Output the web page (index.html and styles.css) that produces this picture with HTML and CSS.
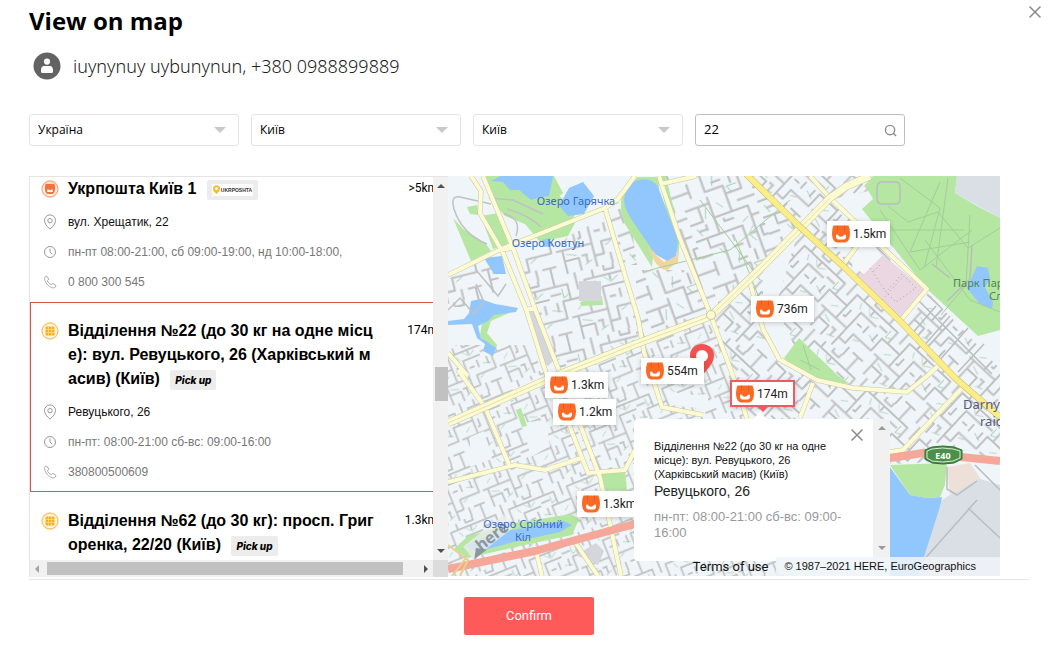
FILE: index.html
```html
<!DOCTYPE html>
<html lang="uk">
<head>
<meta charset="utf-8">
<title>View on map</title>
<link rel="stylesheet" href="styles.css">
</head>
<body>
<svg class="defs" aria-hidden="true">
  <symbol id="i-bag" viewBox="0 0 18 18"><path fill="#fa6a25" d="M1.500.5h15q1.800 4 1.400 9.500c-.4 5-2.400 7.500-5.900 7.500H6C2.500 17.500.5 15 .1 10Q-.3 4.500 1.500.5z"/><path fill="#fff" d="M4 9.800h2q.5 2 3 2t3-2h2q.5 4.800-2.500 4.800h-5Q3.500 14.600 4 9.800z"/><path stroke="#d9541a" stroke-width=".7" d="M5.500.5v5M12.500.5v5"/></symbol>
  <symbol id="i-pin" viewBox="0 0 16 16"><path fill="none" stroke="#999" d="M8 15.200C5 12.500 2.500 9.800 2.500 6.400a5.500 5.500 0 0 1 11 0c0 3.400-2.500 6.100-5.500 8.800z"/><circle cx="8" cy="6.700" r="2.200" fill="none" stroke="#999"/></symbol>
  <symbol id="i-clock" viewBox="0 0 16 16"><circle cx="8" cy="8" r="5.500" fill="none" stroke="#999"/><path fill="none" stroke="#999" d="M8 4.500V8l2.200 2.200"/></symbol>
  <symbol id="i-phone" viewBox="0 0 16 16"><path fill="none" stroke="#aaa" d="M3.200 2.600 4.600 2l2.200 3-1.400 1.700c.6 1.700 2 3.200 3.800 4l1.800-1.400 3 2.200-.8 1.700c-1.500 1.600-5 .2-7.400-2.200S1.600 4.400 3.200 2.600z"/></symbol>
  <symbol id="i-grid" viewBox="0 0 18 18"><circle cx="9" cy="9" r="8" fill="#fff8e6" stroke="#f7c566" stroke-width="1.300"/><rect x="4.500" y="4.500" width="9" height="9" rx="1" fill="#f9ae1f"/><path stroke="#fdd98c" stroke-width=".8" d="M7.500 4.500v9M10.500 4.500v9M4.500 7.500h9M4.500 10.500h9"/></symbol>
  <symbol id="i-ring" viewBox="0 0 18 18"><circle cx="9" cy="9" r="8" fill="#fff3ec" stroke="#f8a983" stroke-width="1.300"/><path fill="#f4733a" d="M4.500 3.800h9q1 3 .5 6-.5 4.200-3.200 4.200H7.200Q4.500 14 4 9.800q-.5-3 .5-6z"/><path fill="#fff" d="M6.300 9.600h1.200q1.500 1 3 0h1.200v2.400H6.300z"/></symbol>
</svg>

<main class="dialog">
  <button class="close" type="button" aria-label="Close"><svg viewBox="0 0 14 14"><path d="M1.500 1.500l11 11M12.500 1.500l-11 11"/></svg></button>
  <h1>View on map</h1>
  <div class="user">
    <svg viewBox="0 0 28 28" aria-hidden="true"><circle cx="14" cy="14" r="13.500" fill="#636363"/><circle cx="14" cy="9.600" r="3.100" fill="#fff"/><path fill="#fff" d="M10 14h8q2 1 2 4v1.500q0 1.500-1.500 1.500h-9Q8 21 8 19.500V18q0-3 2-4z"/></svg>
    <span>iuynynuy uybunynun, +380 0988899889</span>
  </div>

  <form class="filters">
    <label class="field field--select"><select aria-label="Country"><option>Україна</option></select></label>
    <label class="field field--select"><select aria-label="Region"><option>Київ</option></select></label>
    <label class="field field--select"><select aria-label="City"><option>Київ</option></select></label>
    <label class="field field--search"><input type="text" value="22" aria-label="Search"><svg viewBox="0 0 14 14" aria-hidden="true"><circle cx="6.500" cy="6.500" r="5"/><path d="M10 10l3 3"/></svg></label>
  </form>

  <div class="results">
    <section class="list" aria-label="Pick-up points">
      <div class="list__view">
        <ul>
          <li class="point">
            <svg class="point__icon"><use href="#i-ring"/></svg>
            <h2>Укрпошта Київ 1 <span class="brand"><span><svg viewBox="0 0 8 10"><path fill="#f3bd2c" d="M4 0a4 4 0 0 1 4 4q0 2.500-4 6Q0 6.500 0 4a4 4 0 0 1 4-4z"/><circle cx="4" cy="4" r="1.600" fill="#fff"/></svg>UKRPOSHTA</span></span></h2>
            <span class="distance">&gt;5km</span>
            <p class="address"><svg><use href="#i-pin"/></svg>вул. Хрещатик, 22</p>
            <p><svg><use href="#i-clock"/></svg>пн-пт 08:00-21:00, сб 09:00-19:00, нд 10:00-18:00,</p>
            <p><svg><use href="#i-phone"/></svg>0 800 300 545</p>
          </li>
          <li class="point point--active">
            <svg class="point__icon"><use href="#i-grid"/></svg>
            <h2>Відділення №22 (до 30 кг на одне місце): вул. Ревуцького, 26 (Харківський масив) (Київ) <span class="tag">Pick up</span></h2>
            <span class="distance">174m</span>
            <p class="address"><svg><use href="#i-pin"/></svg>Ревуцького, 26</p>
            <p><svg><use href="#i-clock"/></svg>пн-пт: 08:00-21:00 сб-вс: 09:00-16:00</p>
            <p><svg><use href="#i-phone"/></svg>380800500609</p>
          </li>
          <li class="point">
            <svg class="point__icon"><use href="#i-grid"/></svg>
            <h2>Відділення №62 (до 30 кг): просп. Григоренка, 22/20 (Київ) <span class="tag">Pick up</span></h2>
            <span class="distance">1.3km</span>
          </li>
        </ul>
      </div>
      <div class="bar bar--v"><i class="arrow arrow--up"></i><i class="thumb"></i><i class="arrow arrow--down"></i></div>
      <div class="bar bar--h"><i class="arrow arrow--left"></i><i class="thumb"></i><i class="arrow arrow--right"></i></div>
      <div class="corner"></div>
    </section>

    <section class="map" aria-label="Map">
      <svg class="map__canvas" viewBox="448 176 552 400" preserveAspectRatio="xMinYMin slice">
        <defs>
          <pattern id="st" width="96" height="84" patternUnits="userSpaceOnUse" patternTransform="rotate(-14) scale(.8)">
            <g fill="none" stroke="#c0c1c2" stroke-width="2.600" stroke-linejoin="round">
              <path d="M0 12h26v20h22V12h48M0 54h16V32h10M48 32v22H30v30M48 54h20V26h28M68 54v30M96 54H80v16H68M0 72h18M10 0v12M38 0v12M30 68h18v16M38 12v10M60 12V2M80 12v8M82 40h-8M56 32v12h-4M8 32v12M88 84V70M22 54h8M10 84V72M58 66v10"/>
              <path d="M75 0v6h12V0M52 66h8M88 32v12M2 22h14"/>
            </g>
            <path d="M18 16v12l8-4M40 40l-8 6M72 14l8 8 10-6M54 78l10-4M84 60l8-4M0 40l12 4M60 16l4 8M34 60l12 4" fill="none" stroke="#9cc6a6"/>
          </pattern>
          <pattern id="st2" href="#st" patternTransform="rotate(70) scale(.85)"/>
          <pattern id="st3" href="#st" patternTransform="rotate(43) scale(.75)"/>
          <pattern id="st4" href="#st" patternTransform="rotate(-22) scale(.65)"/>
          <path id="roads" fill="none" stroke-linejoin="round" d="M448 275l53-26 104-41 13-9 17-23M471 176l10 15-1 22 23 40 23 56 20 64 24 54 18 46 37-3 10-20M483 176l30 72 22 61 25 64 21 54 19 50 21 99M605 208l13 44 20 66 6 34 18 55 41 8M659 176l20 60 32 80 22 60 14 43M661 184l35-8M749 279l14 50 16 30 38 21 36 8 54 4 20-16 11-10M810 176l20 22 97 91-27 32M857 246l-15 20M965 385l-62 65-13 2M813 383l-13 35M458 370l27 37 25 60M448 482l67-17 30 5 36-12M536 551l6 25M575 542l23 34M448 353l20 23M526 309l9 0M500 250l13-2"/>
        </defs>
        <rect x="448" y="176" width="552" height="400" fill="#f0f5f9"/>
        <path fill="url(#st)" d="M518 262l90-46 30 110v20l-80 28-25-62zM448 275l40-18 15 30-30 20-25 0z"/>
        <path fill="url(#st2)" d="M659 176h87l53 50-88 90zM636 270l60 0 15 46-75 27zM605 205l22-10 10 70-14 0z"/>
        <path fill="url(#st3)" d="M746 176h127v14l-43 10-31 28zM799 229l11-10 20-20 60 60 20 60 18-26 72 76v90l-110 5-80-55-20-75-15-25z"/>
        <path fill="url(#st3)" d="M711 316l52-50 0 66 22 38 30 14-15 40-50 0z"/>
        <path fill="url(#st4)" d="M448 345h78l20 28-98 50zM448 422l112-48 76-30 75-27 35 102-110 0v157H448zM634 556h150v20H634z"/>
        <path fill="#f0f5f9" d="M522 423l24-3 4 26-19 11zM470 437l14-6 8 28-22 8zM672 392l36 5 0 12-38-4z"/>

        <g fill="#b5e6a2">
          <path d="M453 218l10 11 22 14 6 8-20 10zM481 216l17-3 12 31-17 5zM467 207l10-2 2 10-9-1z"/>
          <path d="M489 198l-3-22h68l9 17-15 13 27 17-7 13-28 6-15-18-20-8z"/>
          <path d="M555 192l22 20-14 22-16 4-30-20z"/>
          <path d="M658 176h8l14 62-2 20zM622 196q3-17 14-19h24l-8 90-24-38q-10-15-6-33z"/>
          <path d="M873 176h84l-2 17 22 13 23 12v112l-22 6-51-47-65-80 11-10-8-14z"/>
          <path d="M799 338l39 38 12 8-32-4-20-10-14-12z"/>
          <path d="M580 302l22-6 1 9-22 1zM483 318l20-9 8 3-20 9-4 12 10 12-2 6-6 0-9-16zM601 473l24-4 2 22-26-1z"/>
          <path d="M516 410l5-2 6 18-5 1zM454 549l14-13 47-13 56-9 8 5-7 16-57 12-47 11z"/>
          <path d="M890 465l57-2-2 22-5 12-13 1-17-3zM990 526l10-8v12l-8 4z"/>
        </g>
        <path fill="#f2d59c" d="M648 248l16 14 12-6 3-8-1 14-11 8q-6 0-12-8z"/>
        <g fill="#92c7fd">
          <path d="M491 181l10-5h52l-4 20q-12 2-18 4l-12-10-9 0-7-8zM559 206l10-18 14-6 11 14-10 18-16 2z"/>
          <path d="M624 200q2-17 14-20 14-3 20 7l20 53-2 16-9 5-12-7-19-28q-12-16-12-26z"/>
          <path d="M484 258l18-2 4 18-12 0z M542 240l8-2 2 8-8 1z"/>
          <path d="M471 301l10-2 14 5 23 4-2 4-22 3-6 6-10 5 3 12 15 10-3 8-10-5 2-7-8-6-5-14-24 1v-4l16-2 5-6z"/>
          <path d="M466 546l24-12 74-13 8 4-12 7-46 10-38 10z"/>
          <path d="M977 266l11 2 2 11-5 8 8 16-1 6-12-5-13-16z"/>
          <path d="M890 467l20 28 17 3 15-1-4 23-13 37-7 19h-28z"/>
        </g>
        <path fill="#d9dfe4" d="M957 176h43v42l-45-25zM942 500l35-22 23 7v91h-82z"/>
        <path fill="#ece0d8" d="M947 467l23-4 10 15-30 18z"/>
        <path fill="#ead7e2" d="M873 247l54 44-28 30-42-44 16-16z"/>
        <path fill="#f3f7fa" d="M856 250l14-10 12 16-18 18-12-8z"/>
        <path fill="#d4d6dc" d="M579 281h22v20h-22zM530 312l6-2 18 50-6 6-6-6zM576 555l20-12 8 8-6 14z"/>
        <g fill="none" stroke="#a4cd9a">
          <path d="M888 206l20 16 30-10 30 36 32-20M900 178l40 30-16 60M940 182l-30 70 60-10M880 210l40 60 52-40M925 240l45 60 30 12M948 178l-12 90M970 215l-4 70-25 30M890 230l74 0"/>
          <path d="M700 200l38 50 22 30M790 200l-60 50-80 20M803 345l8 25M800 360l20 10M736 240l24 60"/>
        </g>
        <path fill="none" stroke="#b8bdc0" stroke-width="1.500" d="M877 187q0-5 6-5h12q5 0 5 5v12q0 5-5 5h-12q-6 0-6-5zM972 245l-2 34-23 22M932 264l18 14M918 300l74 74M936 306l-26 30M950 316l-28 32M968 328l-30 34M984 344l-26 28M947 467l0 22 10 6 20-14M975 465l25 25M977 500l-55 62M968 508l32 30"/>
        <path fill="none" stroke="#a99cab" stroke-dasharray="1 3" d="M870 268l16 24 17-19M880 265l-8 8M882 300l22-24 12 12-20 14-10-10"/>
        <path fill="none" stroke="#bfc1c4" stroke-width="1.500" d="M487 244q-25-10-33-35-4-14 6-12l31 7M504 214q18 4 12 22M507 209q22 6 34 18M489 198l24 2 30 14M448 310l12-12 14 16 10-12-8-18M476 270l22 26 8-12"/>

        <use href="#roads" stroke="#c9c8a0" stroke-width="5"/>
        <use href="#roads" stroke="#fdfbd3" stroke-width="4"/>
        <g fill="none" stroke-linejoin="round">
          <path stroke="#c9c8a0" stroke-width="8" d="M448 423l112-49 76-30 75-28 52-50 67-68 17-12 23-10"/>
          <path stroke="#fcfad0" stroke-width="7" d="M448 423l112-49 76-30 75-28 52-50 67-68 17-12 23-10"/>
          <path stroke="#dedbaa" stroke-width=".8" d="M448 423l112-49 76-30 75-28 52-50 67-68"/>
          <circle cx="711" cy="315" r="4.500" fill="#fcfad0" stroke="#c9c8a0"/>
          <path stroke="#c9b968" stroke-width="6.500" d="M746 174l53 52 44 40 57 55 55 57 45 39"/>
          <path stroke="#fbee88" stroke-width="5.500" d="M746 174l53 52 44 40 57 55 55 57 45 39"/>
          <path stroke="#f5a899" stroke-width="8" d="M448 569l87-18 100-27 120-30 135-36 33-5 77 8"/>
          <path stroke="#e8d28a" stroke-width="2" d="M448 545l20 15-8 16M452 576l14-18"/>
        </g>
        <g transform="rotate(-38 490 537)"><path fill="#e9ecec" fill-opacity=".8" d="M463 528h52v16h-52z"/><text x="474" y="543" class="here">here</text><path fill="#8c969b" d="M464 545l8-8 8 8z"/></g>
        <g class="water-label"><text x="576" y="205">Озеро Гарячка</text><text x="548" y="247">Озеро Ковтун</text><text x="523" y="528">Озеро Срібний</text><text x="523" y="541">Кіл</text></g>
        <g class="park-label"><text x="953" y="287">Парк Партизанської</text><text x="989" y="300">Слави</text></g>
        <g class="area-label"><text x="963" y="409">Darnytskyi</text><text x="980" y="426">raion</text></g>
        <path fill="#4a9048" stroke="#2f7433" d="M932 447q11-2 22 0l8 3v9l-8 4q-11 2-22 0l-7-4v-9z"/><path fill="none" stroke="#fff" stroke-width=".8" d="M932 449q11-2 21 0l7 2v7l-7 3q-10 2-21 0l-5-3v-7z"/>
        <text x="943" y="459" class="shield">E40</text>
        <path fill="#f4504f" d="M702 344c7 0 12 5 12 11 0 7-4 12-12 20-8-8-12-13-12-20 0-6 5-11 12-11z"/><circle cx="702" cy="356" r="6" fill="#fff"/>
      </svg>

      <button type="button" class="pin pin--a"><svg><use href="#i-bag"/></svg>1.5km</button>
      <button type="button" class="pin pin--b"><svg><use href="#i-bag"/></svg>736m</button>
      <button type="button" class="pin pin--c"><svg><use href="#i-bag"/></svg>554m</button>
      <button type="button" class="pin pin--d"><svg><use href="#i-bag"/></svg>1.3km</button>
      <button type="button" class="pin pin--e"><svg><use href="#i-bag"/></svg>1.2km</button>
      <button type="button" class="pin pin--f"><svg><use href="#i-bag"/></svg>1.3km</button>
      <button type="button" class="pin pin--g pin--active"><svg><use href="#i-bag"/></svg>174m</button>

      <div class="popup">
        <div class="popup__body">
          <button class="popup__close" type="button" aria-label="Close"><svg viewBox="0 0 14 14"><path d="M1.500 1.500l11 11M12.500 1.500l-11 11"/></svg></button>
          <h3>Відділення №22 (до 30 кг на одне місце): вул. Ревуцького, 26 (Харківський масив) (Київ)</h3>
          <p class="popup__address">Ревуцького, 26</p>
          <p class="popup__hours">пн-пт: 08:00-21:00 сб-вс: 09:00-16:00</p>
        </div>
        <div class="bar bar--popup"><i class="arrow arrow--up"></i><i class="arrow arrow--down"></i></div>
      </div>
      <div class="credits"><a href="#terms">Terms of use</a><span>© 1987–2021 HERE, EuroGeographics</span></div>
    </section>
  </div>

  <footer><button class="confirm" type="button">Confirm</button></footer>
</main>
</body>
</html>
```
FILE: styles.css
```css
* { box-sizing: border-box; }
body { margin: 0; background: #fff; color: #000; font-family: "Liberation Sans", Arial, sans-serif; font-size: 12px; }
h1, h2, h3, p, ul { margin: 0; padding: 0; }
ul { list-style: none; }
button { font: inherit; border: 0; padding: 0; background: none; cursor: pointer; }
.defs { display: none; }

.dialog { position: relative; padding: 5px 21px 0 29px; }
.close { position: absolute; top: 5px; right: 8px; width: 14px; height: 14px; }
.close svg, .popup__close svg { display: block; width: 100%; fill: none; stroke: #8a8a8a; stroke-width: 1.5; }
h1 { font: 700 24px/32px "Open Sans", sans-serif; }
.user { display: flex; align-items: center; gap: 12px; height: 30px; margin-top: 14px; padding-left: 4px; color: #222; font: 300 18px/30px "Noto Sans", sans-serif; }
.user svg { width: 28px; height: 28px; }

.filters { display: flex; gap: 12px; margin-top: 33px; }
.field { position: relative; flex: 0 1 210px; height: 32px; }
.field select, .field input { width: 100%; height: 100%; border: 1px solid #e4e4e4; border-radius: 3px; padding: 0 8px 2px; background: #fff; color: #000; appearance: none; outline: 0; }
.field select { font: 12px "Open Sans", sans-serif; }
.field input { border-color: #bfbfbf; font: 13px "Open Sans", sans-serif; }
.field--select::after { content: ""; position: absolute; top: 13px; right: 13px; border: 6px solid transparent; border-top-color: #c9c9c9; border-bottom: 0; }
.field--search svg { position: absolute; top: 10px; right: 8px; width: 13px; fill: none; stroke: #8c8c8c; stroke-width: 1.5; }

.results { display: flex; height: 401px; margin-top: 30px; padding-right: 29px; }
.list { flex: 0 0 419px; display: grid; grid-template: 1fr 17px / 1fr 15px; min-height: 0; border: 1px solid #e4e4e4; border-width: 1px 0 0 1px; }
.list__view { overflow: hidden; }
.list ul { width: 421px; margin-top: -17px; }
.point { display: grid; grid-template-columns: 18px 310px 1fr; column-gap: 9px; border: 1px solid transparent; padding: 16px 12px 4px 10px; }
.point--active { border-color: #d9534f; }
.point__icon { width: 18px; height: 18px; margin-top: 3px; }
.point h2 { margin-bottom: 6px; font-size: 16px; line-height: 24px; word-break: break-all; }
.distance { justify-self: end; line-height: 22px; font-size: 12px; font-family: Roboto, sans-serif; }
.point p { grid-column: 1 / -1; display: flex; align-items: center; gap: 10px; height: 30px; padding-left: 1px; color: #777; white-space: nowrap; }
.point p.address { color: #111; }
.point p svg { width: 16px; height: 16px; }
.tag, .brand { display: inline-flex; align-items: center; height: 20px; margin-left: 6px; padding: 0 5px; border-radius: 2px; background: #ececec; vertical-align: middle; }
.tag { font: italic 800 10px/20px Inter, sans-serif; white-space: nowrap; }
.brand span { display: flex; align-items: center; gap: 1px; height: 12px; padding: 0 1px; background: #fff; color: #333; font: 700 5px/12px "Liberation Sans", sans-serif; }
.brand svg { width: 7px; height: 9px; }

.bar { display: flex; align-items: center; justify-content: space-between; background: #f1f1f1; }
.bar--v { flex-direction: column; padding: 7px 0; }
.bar--v .thumb { width: 13px; height: 34px; margin: 179px 0 auto auto; }
.bar--h { padding: 0 5px; }
.bar--h .thumb { width: 356px; height: 13px; margin: 0 auto 0 8px; }
.thumb { background: #c1c1c1; }
.corner { background: #dcdcdc; }
.arrow { border: 4px solid transparent; }
.arrow--up { border-top: 0; border-bottom-color: #505050; }
.arrow--down { border-bottom: 0; border-top-color: #505050; }
.arrow--left { border-left: 0; border-right-color: #a3a3a3; }
.arrow--right { border-right: 0; border-left-color: #505050; }

.map { position: relative; flex: 1; min-width: 0; height: 400px; overflow: hidden; background: #f0f5f9; }
.map__canvas { display: block; width: 100%; height: 100%; font-family: "Noto Sans", sans-serif; }
.water-label { fill: #3a6cc0; font-size: 11px; text-anchor: middle; }
.park-label { fill: #4e8457; font-size: 11px; }
.area-label { fill: #5a5a80; font-size: 13px; }
.shield { fill: #fff; font-size: 9px; font-weight: 700; text-anchor: middle; }
.here { fill: #8c969b; font-size: 16px; font-weight: 700; }

.pin { position: absolute; display: flex; align-items: center; gap: 3px; width: 63px; height: 26px; padding-left: 5px; background: #fff; color: #222; font: 12px Roboto, sans-serif; box-shadow: 0 1px 5px rgba(0, 0, 0, .2); }
.pin svg { flex: none; width: 18px; height: 18px; }
.pin--a { left: 379px; top: 45px; }
.pin--b { left: 303px; top: 120px; }
.pin--c { left: 193px; top: 182px; }
.pin--d { left: 97px; top: 196px; }
.pin--e { left: 105px; top: 223px; }
.pin--f { left: 129px; top: 315px; }
.pin--g { left: 282px; top: 204px; }
.pin--active { width: 65px; height: 27px; border: 2px solid #ee5a62; padding-left: 4px; }
.pin--active::after { content: ""; position: absolute; left: 26px; top: 25px; border: 5px solid transparent; border-top-color: #ee5a62; border-bottom: 0; }

.popup { position: absolute; left: 186px; top: 243px; display: flex; align-items: flex-start; width: 256px; }
.popup::before { content: ""; position: absolute; left: 118px; top: -7px; border: 8px solid transparent; border-bottom-color: #fff; border-top: 0; }
.popup__body { position: relative; flex: 1; min-height: 142px; padding: 20px; border-radius: 4px 0 0 4px; background: #fff; }
.popup__close { position: absolute; top: 9px; right: 9px; width: 14px; height: 14px; }
.popup h3 { font-size: 11px; font-weight: 400; line-height: 14px; color: #111; }
.popup__address { font-size: 14px; line-height: 20px; color: #222; }
.popup__hours { margin-top: 8px; font-size: 13px; line-height: 16px; color: #999; }
.bar--popup { flex: none; flex-direction: column; width: 17px; height: 138px; padding: 7px 0; }
.bar--popup .arrow--up { border-bottom-color: #999; }
.bar--popup .arrow--down { border-top-color: #999; }

.credits { position: absolute; right: 0; bottom: 0; display: flex; align-items: center; height: 19px; color: #111; font: 11px "Liberation Sans", sans-serif; }
.credits a { padding-right: 8px; color: inherit; font: 13px Roboto, sans-serif; text-decoration: none; }
.credits span { height: 19px; padding: 0 24px 0 8px; background: rgba(240, 245, 249, .85); line-height: 19px; }

footer { display: flex; justify-content: center; margin-top: 2px; padding-top: 17px; border-top: 1px solid #e4e4e4; }
.confirm { width: 130px; height: 38px; padding-bottom: 2px; border-radius: 2px; background: #ff5a5a; color: #fff; font: 13px Roboto, sans-serif; }
```
